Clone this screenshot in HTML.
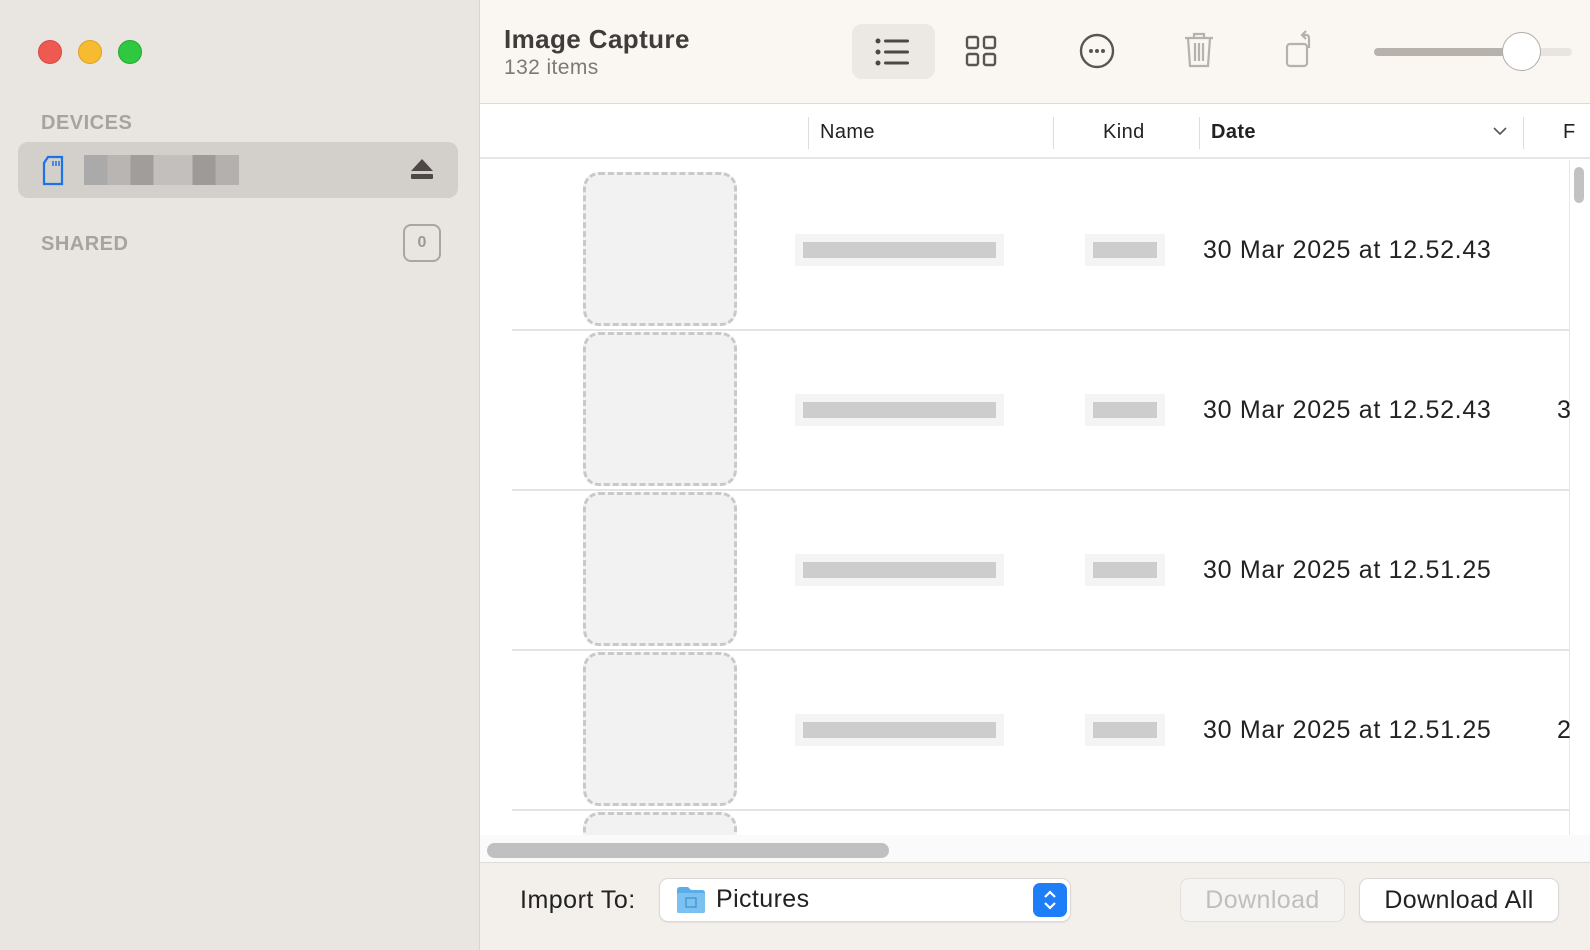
<!DOCTYPE html>
<html><head><meta charset="utf-8"><style>
*{margin:0;padding:0;box-sizing:border-box}
body{width:1590px;height:950px;overflow:hidden;font-family:"Liberation Sans",sans-serif;background:#fff;position:relative}
.abs{position:absolute}
.side{left:0;top:0;width:480px;height:950px;background:#e9e5e1;border-right:1px solid #d8d4d0}
.dot{width:24px;height:24px;border-radius:50%;top:40px}
.lbl{font-weight:bold;color:#a7a3a0;font-size:20px;letter-spacing:.5px}
.tb{left:480px;top:0;width:1110px;height:104px;background:#faf6f2;border-bottom:1px solid #dedad6}
.hdr{left:480px;top:105px;width:1110px;height:54px;background:#fff;border-bottom:2px solid #e6e6e6;font-size:20px;color:#222}
.div{width:1px;height:32px;top:12px;background:#ddd}
.thumb{width:154px;height:154px;border:3px dashed #c9c9c9;border-radius:16px;background:#f2f2f2;left:583px}
.date{left:1203px;font-size:25px;color:#222;letter-spacing:.7px}
.sep{left:512px;width:1057px;height:2px;background:#e4e4e4}
.blur{background:#bdbdbd;opacity:.75;height:16px;box-shadow:0 0 0 8px rgba(200,200,200,.25)}
.bot{left:480px;top:862px;width:1110px;height:88px;background:#f3efeb;border-top:1px solid #e0dcd8}
.btn{height:42px;border-radius:8px;background:#fff;box-shadow:0 0 0 1px #d9d9d9,0 1px 2px rgba(0,0,0,.15);font-size:25px;text-align:center;line-height:42px}
.hd{font-size:20px;color:#222;letter-spacing:.4px}
</style></head><body>
<div class="abs side"></div>
<div class="abs dot" style="left:38px;background:#ee5a52;border:1px solid #d9453e"></div>
<div class="abs dot" style="left:78px;background:#f6bb2e;border:1px solid #dea123"></div>
<div class="abs dot" style="left:118px;background:#2fc840;border:1px solid #23a92f"></div>
<div class="abs lbl" style="left:41px;top:112px">DEVICES</div>
<div class="abs" style="left:18px;top:142px;width:440px;height:56px;background:#d3cfcb;border-radius:10px"></div>
<svg class="abs" style="left:40px;top:155px" width="26" height="32" viewBox="0 0 26 32"><path d="M8 2h14v27H4V8z" fill="none" stroke="#1a73e8" stroke-width="2.2"/><path d="M13 6v5M16 6v5M19 6v5" stroke="#1a73e8" stroke-width="1.5"/></svg>
<div class="abs" style="left:84px;top:155px;width:155px;height:30px;background:linear-gradient(90deg,#aaa 0 15%,#b8b5b2 15% 30%,#a09d9a 30% 45%,#c2bfbc 45% 70%,#9d9a97 70% 85%,#b3b0ad 85%)"></div>
<svg class="abs" style="left:410px;top:157px" width="24" height="24" viewBox="0 0 24 24"><path d="M12 2L23 14H1z" fill="#4d4845"/><rect x="1" y="17" width="22" height="5" rx="1" fill="#4d4845"/></svg>
<div class="abs lbl" style="left:41px;top:233px">SHARED</div>
<div class="abs" style="left:403px;top:224px;width:38px;height:38px;border:2px solid #aaa6a2;border-radius:8px;color:#999;font-size:16px;font-weight:bold;text-align:center;line-height:34px">0</div>

<div class="abs tb"></div>
<div class="abs" style="left:504px;top:24px;font-size:26px;font-weight:bold;color:#3f3c3a;letter-spacing:.4px">Image Capture</div>
<div class="abs" style="left:504px;top:56px;font-size:21px;color:#7d7976;letter-spacing:.4px">132 items</div>
<div class="abs" style="left:852px;top:24px;width:83px;height:55px;background:#ece8e4;border-radius:10px"></div>
<svg class="abs" style="left:875px;top:37px" width="36" height="30" viewBox="0 0 36 30"><g fill="#4d4845"><circle cx="3" cy="4" r="2.5"/><circle cx="3" cy="15" r="2.5"/><circle cx="3" cy="26" r="2.5"/><rect x="9" y="2.5" width="25" height="3" rx="1.5"/><rect x="9" y="13.5" width="25" height="3" rx="1.5"/><rect x="9" y="24.5" width="25" height="3" rx="1.5"/></g></svg>
<svg class="abs" style="left:965px;top:35px" width="32" height="32" viewBox="0 0 32 32" fill="none" stroke="#5a5552" stroke-width="2.4"><rect x="2" y="2" width="11" height="11" rx="2"/><rect x="19" y="2" width="11" height="11" rx="2"/><rect x="2" y="19" width="11" height="11" rx="2"/><rect x="19" y="19" width="11" height="11" rx="2"/></svg>
<svg class="abs" style="left:1079px;top:33px" width="36" height="36" viewBox="0 0 36 36"><circle cx="18" cy="18" r="16" fill="none" stroke="#5a5552" stroke-width="2.4"/><g fill="#5a5552"><circle cx="12" cy="18" r="2"/><circle cx="18" cy="18" r="2"/><circle cx="24" cy="18" r="2"/></g></svg>
<svg class="abs" style="left:1183px;top:31px" width="32" height="38" viewBox="0 0 32 38" fill="none" stroke="#b5b1ae" stroke-width="2.2"><path d="M2 7h28M11 7V3h10v4M5 7l2 28h18l2-28M12 12v18M16 12v18M20 12v18"/></svg>
<svg class="abs" style="left:1285px;top:30px" width="34" height="40" viewBox="0 0 34 40" fill="none" stroke="#b5b1ae" stroke-width="2.2"><rect x="2" y="14" width="20" height="22" rx="3"/><path d="M24 18V8q0-3-3-3h-3M21 1l-4 4 4 4"/></svg>
<div class="abs" style="left:1374px;top:48px;width:150px;height:8px;background:#b8b2ad;border-radius:4px"></div>
<div class="abs" style="left:1520px;top:48px;width:52px;height:8px;background:#e8e4e0;border-radius:4px"></div>
<div class="abs" style="left:1502px;top:32px;width:39px;height:39px;border-radius:50%;background:#fff;border:1.5px solid #b0aca8"></div>

<div class="abs hdr"></div>
<div class="abs div" style="left:808px;top:117px"></div>
<div class="abs div" style="left:1053px;top:117px"></div>
<div class="abs div" style="left:1199px;top:117px"></div>
<div class="abs div" style="left:1523px;top:117px"></div>
<div class="abs hd" style="left:820px;top:121px">Name</div>
<div class="abs hd" style="left:1103px;top:121px">Kind</div>
<div class="abs hd" style="left:1211px;top:121px;font-weight:bold">Date</div>
<svg class="abs" style="left:1492px;top:126px" width="16" height="10" viewBox="0 0 16 10"><path d="M2 2l6 6 6-6" fill="none" stroke="#555" stroke-width="1.6"/></svg>
<div class="abs hd" style="left:1563px;top:121px">F</div>

<div class="abs" style="left:1569px;top:160px;width:1px;height:675px;background:#e6e6e6"></div>
<div class="abs" style="left:1574px;top:167px;width:10px;height:36px;background:#c2c2c2;border-radius:5px"></div>

<div class="abs thumb" style="top:172px"></div>
<div class="abs thumb" style="top:332px"></div>
<div class="abs thumb" style="top:492px"></div>
<div class="abs thumb" style="top:652px"></div>
<div class="abs thumb" style="top:812px;height:40px;border-bottom:none;border-radius:16px 16px 0 0"></div>
<div class="abs" style="left:480px;top:835px;width:1110px;height:27px;background:#fafafa"></div>

<div class="abs sep" style="top:329px"></div>
<div class="abs sep" style="top:489px"></div>
<div class="abs sep" style="top:649px"></div>
<div class="abs sep" style="top:809px"></div>

<div class="abs blur" style="left:803px;top:242px;width:193px"></div>
<div class="abs blur" style="left:1093px;top:242px;width:64px"></div>
<div class="abs date" style="top:236px">30 Mar 2025 at 12.52.43</div>
<div class="abs blur" style="left:803px;top:402px;width:193px"></div>
<div class="abs blur" style="left:1093px;top:402px;width:64px"></div>
<div class="abs date" style="top:396px">30 Mar 2025 at 12.52.43</div>
<div class="abs date" style="left:1557px;top:396px">3</div>
<div class="abs blur" style="left:803px;top:562px;width:193px"></div>
<div class="abs blur" style="left:1093px;top:562px;width:64px"></div>
<div class="abs date" style="top:556px">30 Mar 2025 at 12.51.25</div>
<div class="abs blur" style="left:803px;top:722px;width:193px"></div>
<div class="abs blur" style="left:1093px;top:722px;width:64px"></div>
<div class="abs date" style="top:716px">30 Mar 2025 at 12.51.25</div>
<div class="abs date" style="left:1557px;top:716px">2</div>

<div class="abs" style="left:487px;top:843px;width:402px;height:15px;background:#c0c0c0;border-radius:8px"></div>

<div class="abs bot"></div>
<div class="abs" style="left:520px;top:886px;font-size:25px;color:#222;letter-spacing:.5px">Import To:</div>
<div class="abs btn" style="left:660px;top:879px;width:410px;text-align:left"></div>
<svg class="abs" style="left:676px;top:886px" width="30" height="28" viewBox="0 0 30 28"><path d="M1 4q0-3 3-3h8l3 3h11q3 0 3 3v18q0 2-2 2H3q-2 0-2-2z" fill="#5aaee8"/><rect x="1" y="7" width="28" height="20" rx="2" fill="#7cc2f0"/><rect x="10" y="12" width="10" height="9" fill="none" stroke="#3a8fd0" stroke-width="1.2"/></svg>
<div class="abs" style="left:716px;top:885px;font-size:25px;color:#222;letter-spacing:.4px">Pictures</div>
<div class="abs" style="left:1033px;top:883px;width:34px;height:34px;background:#1e7ef7;border-radius:7px"></div>
<svg class="abs" style="left:1042px;top:887px" width="16" height="26" viewBox="0 0 16 26"><path d="M3 10l5-5 5 5M3 16l5 5 5-5" fill="none" stroke="#fff" stroke-width="2.2"/></svg>
<div class="abs btn" style="left:1181px;top:879px;width:163px;background:#f6f4f2;color:#c0bdba;box-shadow:0 0 0 1px #e2dfdc;letter-spacing:.4px">Download</div>
<div class="abs btn" style="left:1360px;top:879px;width:198px;color:#222;letter-spacing:.4px">Download All</div>
</body></html>
